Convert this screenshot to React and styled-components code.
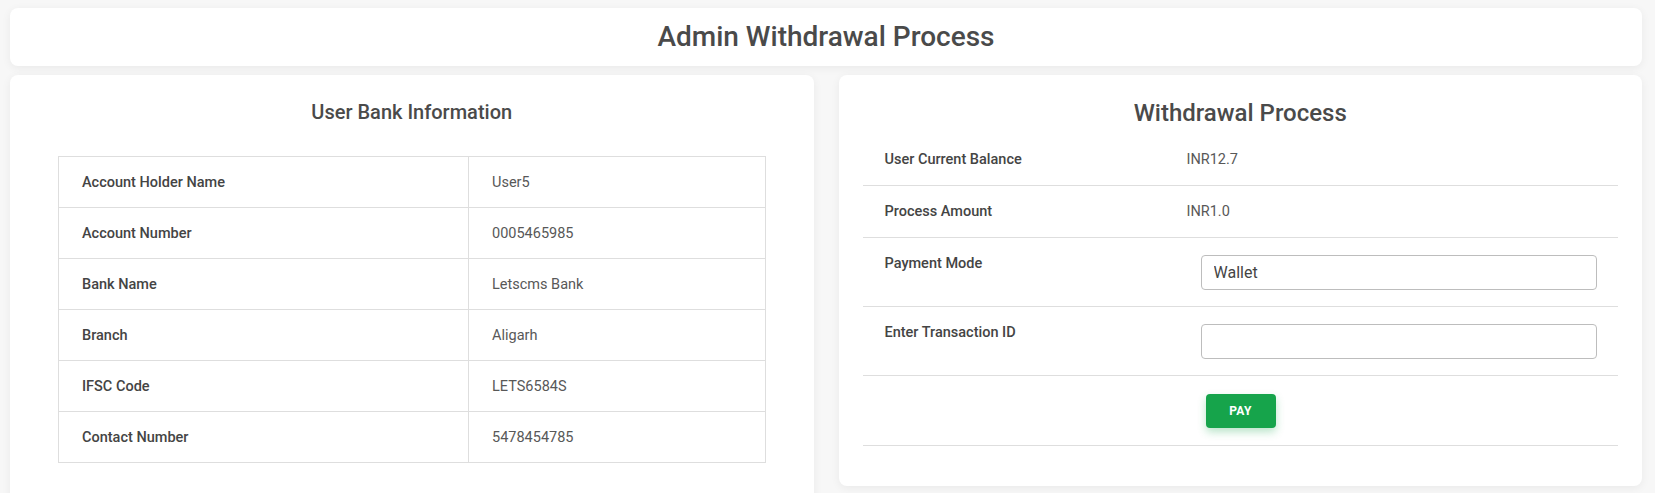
import React from "react";
import styled, { createGlobalStyle } from "styled-components";

const GlobalStyle = createGlobalStyle`
  body {
    margin: 0;
    background: #f7f7f7;
    font-family: Roboto, "Liberation Sans", sans-serif;
    color: #444;
  }
`;

const Page = styled.div`
  padding: 8px 13px 0 10px;
`;

const Card = styled.div`
  background: #fff;
  border-radius: 8px;
  box-shadow: 0 2px 10px rgba(0, 0, 0, 0.06);
`;

const Header = styled(Card)`
  padding: 11px 0 12px;
  text-align: center;
`;

const PageTitle = styled.h1`
  margin: 0;
  font-size: 28px;
  line-height: 35px;
  font-weight: 500;
  color: #4a4a4a;
`;

const Columns = styled.div`
  display: grid;
  grid-template-columns: 1fr 1fr;
  gap: 25px;
  margin-top: 9px;
  align-items: start;
`;

const BankCard = styled(Card)`
  padding: 25px 48px 48px;
`;

const ProcessCard = styled(Card)`
  padding: 24px 24px 40px;
`;

const CardTitle = styled.h2`
  margin: ${(p) => (p.$large ? "0 0 6px" : "0 0 32px")};
  text-align: center;
  font-size: ${(p) => (p.$large ? "24px" : "20px")};
  line-height: ${(p) => (p.$large ? "29px" : "24px")};
  font-weight: 500;
  color: #4a4a4a;
`;

const InfoTable = styled.div`
  border: 1px solid #dedede;
  border-bottom: none;
`;

const InfoRow = styled.div`
  display: grid;
  grid-template-columns: 409px 1fr;
  border-bottom: 1px solid #dedede;
`;

const InfoCell = styled.div`
  padding: 13px 23px 11px;
  line-height: 26px;
  font-size: 14.5px;
  font-weight: ${(p) => (p.$label ? 500 : 400)};
  color: ${(p) => (p.$label ? "#444" : "#585858")};
  & + & {
    border-left: 1px solid #dedede;
  }
`;

const FormRow = styled.div`
  display: grid;
  grid-template-columns: 302px 1fr;
  border-bottom: 1px solid #dedede;
`;

const FormCell = styled.div`
  padding: 13px 21px 12px 22px;
  line-height: 26px;
  font-size: 14.5px;
  font-weight: ${(p) => (p.$label ? 500 : 400)};
  color: ${(p) => (p.$label ? "#444" : "#585858")};
`;

const Input = styled.input`
  display: block;
  box-sizing: border-box;
  width: calc(100% - 14px);
  height: 35px;
  margin: 4px 0 4px 14px;
  padding: 0 12px;
  border: 1px solid #bdbdbd;
  border-radius: 4px;
  font-family: inherit;
  font-size: 16px;
  color: #444;
  background: #fff;
  outline: none;
`;

const PayButton = styled.button`
  display: block;
  width: 70px;
  height: 34px;
  margin: 5px 0 5px 19px;
  border: none;
  border-radius: 4px;
  background: #16a44b;
  color: #fff;
  font-family: inherit;
  font-size: 12px;
  font-weight: 700;
  letter-spacing: 0.3px;
  box-shadow: 0 4px 8px rgba(22, 164, 75, 0.3);
  cursor: pointer;
`;

const bankInfo = [
  ["Account Holder Name", "User5"],
  ["Account Number", "0005465985"],
  ["Bank Name", "Letscms Bank"],
  ["Branch", "Aligarh"],
  ["IFSC Code", "LETS6584S"],
  ["Contact Number", "5478454785"],
];

const App = () => {
  return (
    <Page>
      <GlobalStyle />
      <Header>
        <PageTitle>Admin Withdrawal Process</PageTitle>
      </Header>
      <Columns>
        <BankCard>
          <CardTitle>User Bank Information</CardTitle>
          <InfoTable>
            {bankInfo.map(([label, value]) => (
              <InfoRow key={label}>
                <InfoCell $label>{label}</InfoCell>
                <InfoCell>{value}</InfoCell>
              </InfoRow>
            ))}
          </InfoTable>
        </BankCard>
        <ProcessCard>
          <CardTitle $large>Withdrawal Process</CardTitle>
          <FormRow>
            <FormCell $label>User Current Balance</FormCell>
            <FormCell>INR12.7</FormCell>
          </FormRow>
          <FormRow>
            <FormCell $label>Process Amount</FormCell>
            <FormCell>INR1.0</FormCell>
          </FormRow>
          <FormRow>
            <FormCell $label>Payment Mode</FormCell>
            <FormCell>
              <Input defaultValue="Wallet" />
            </FormCell>
          </FormRow>
          <FormRow>
            <FormCell $label>Enter Transaction ID</FormCell>
            <FormCell>
              <Input />
            </FormCell>
          </FormRow>
          <FormRow>
            <FormCell />
            <FormCell>
              <PayButton>PAY</PayButton>
            </FormCell>
          </FormRow>
        </ProcessCard>
      </Columns>
    </Page>
  );
};

export default App;
